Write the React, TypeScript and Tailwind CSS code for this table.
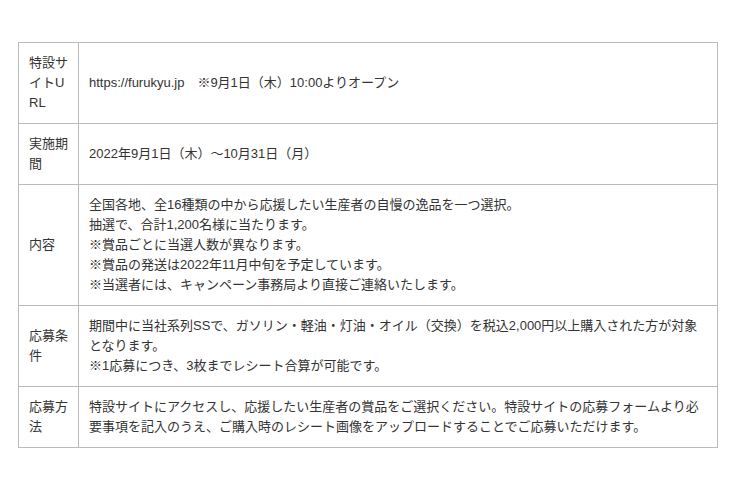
const rows: { label: string; lines: string[] }[] = [
  {
    label: "特設サイトURL",
    lines: ["https://furukyu.jp　※9月1日（木）10:00よりオープン"],
  },
  {
    label: "実施期間",
    lines: ["2022年9月1日（木）～10月31日（月）"],
  },
  {
    label: "内容",
    lines: [
      "全国各地、全16種類の中から応援したい生産者の自慢の逸品を一つ選択。",
      "抽選で、合計1,200名様に当たります。",
      "※賞品ごとに当選人数が異なります。",
      "※賞品の発送は2022年11月中旬を予定しています。",
      "※当選者には、キャンペーン事務局より直接ご連絡いたします。",
    ],
  },
  {
    label: "応募条件",
    lines: [
      "期間中に当社系列SSで、ガソリン・軽油・灯油・オイル（交換）を税込2,000円以上購入された方が対象となります。",
      "※1応募につき、3枚までレシート合算が可能です。",
    ],
  },
  {
    label: "応募方法",
    lines: [
      "特設サイトにアクセスし、応援したい生産者の賞品をご選択ください。特設サイトの応募フォームより必要事項を記入のうえ、ご購入時のレシート画像をアップロードすることでご応募いただけます。",
    ],
  },
];

export default function App() {
  return (
    <div className="min-h-[488px] bg-white pt-[42px] font-['Liberation_Sans','Noto_Sans_CJK_JP',sans-serif] text-[13px] leading-[20px] text-[#333]">
      <div className="ml-[18px] w-[700px] border-x border-t border-[#bbb]">
        {rows.map((row) => (
          <div key={row.label} className="flex border-b border-[#bbb]">
            <div className="flex w-[60px] shrink-0 items-center border-r border-[#bbb] py-[10px] pl-[10px] pr-[9px] break-all">
              {row.label}
            </div>
            <div className="flex flex-1 flex-col justify-center py-[10px] pl-[10px] pr-[10px]">
              {row.lines.map((line) => (
                <p key={line}>{line}</p>
              ))}
            </div>
          </div>
        ))}
      </div>
    </div>
  );
}
